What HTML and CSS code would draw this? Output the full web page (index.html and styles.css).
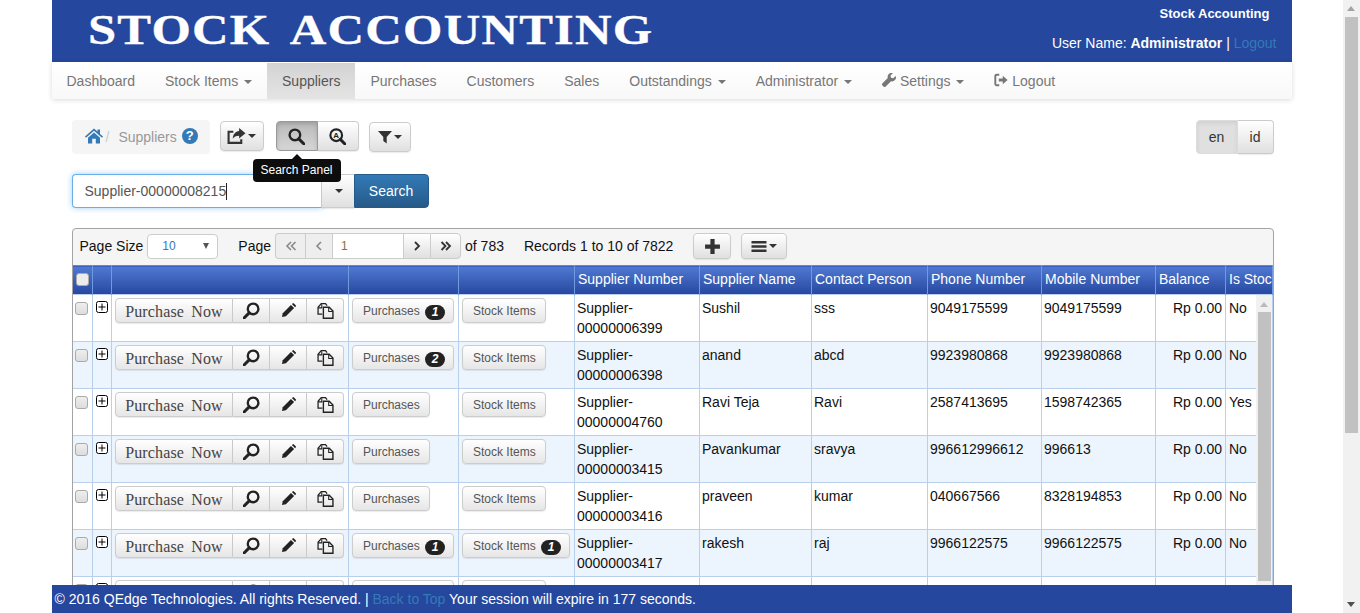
FILE: index.html
```html
<!DOCTYPE html>
<html lang="en">
<head>
<meta charset="utf-8">
<title>Stock Accounting - Suppliers</title>
<link rel="stylesheet" href="styles.css">
</head>
<body>
<svg class="defs" width="0" height="0" aria-hidden="true">
  <symbol id="i-search" viewBox="0 0 16 16"><circle cx="6.500" cy="6.500" r="5" fill="none" stroke="currentColor" stroke-width="2.200"/><path d="M10.200 10.200 15 15" stroke="currentColor" stroke-width="2.800" stroke-linecap="round"/></symbol>
  <symbol id="i-search-l" viewBox="0 0 16 16"><circle cx="9.500" cy="6.500" r="5" fill="none" stroke="currentColor" stroke-width="2.200"/><path d="M5.800 10.200 1 15" stroke="currentColor" stroke-width="2.800" stroke-linecap="round"/></symbol>
  <symbol id="i-pencil" viewBox="0 0 16 16"><path d="M1 15l.9-4.200L10.600 2l3.400 3.400-8.800 8.700z" fill="currentColor"/><path d="M11.600 1l.8-.6a1 1 0 0 1 1.300 0l2 2a1 1 0 0 1 0 1.300l-.7.7z" fill="currentColor"/></symbol>
  <symbol id="i-copy" viewBox="0 0 16 16"><path d="M5 11.500H1V5l3-3.500h4L9.500 3.500" fill="none" stroke="currentColor" stroke-width="1.200"/><path d="M4.500 2v3.500H1" fill="none" stroke="currentColor" stroke-width="1"/><path d="M6 5h5.500l3.500 3.500v6.800H6z" fill="none" stroke="currentColor" stroke-width="1.300"/><path d="M11 5v4h4" fill="none" stroke="currentColor" stroke-width="1"/></symbol>
  <symbol id="i-expand" viewBox="0 0 12 12"><rect x=".5" y=".5" width="11" height="11" rx="2" fill="#fff" stroke="#000"/><path d="M2.500 6h7M6 2.500v7" stroke="#000"/></symbol>
</svg>
<div class="window">
  <div class="viewport">
    <div class="page">
      <header class="masthead">
        <div class="brand">STOCK ACCOUNTING</div>
        <div class="user-box">
          <div class="app-name">Stock Accounting</div>
          <div class="user-line">User Name: <b>Administrator</b> | <a class="dim-link">Logout</a></div>
        </div>
      </header>
      <nav class="navbar">
        <a class="nav-item">Dashboard</a>
        <a class="nav-item">Stock Items <i class="caret"></i></a>
        <a class="nav-item active">Suppliers</a>
        <a class="nav-item">Purchases</a>
        <a class="nav-item">Customers</a>
        <a class="nav-item">Sales</a>
        <a class="nav-item">Outstandings <i class="caret"></i></a>
        <a class="nav-item">Administrator <i class="caret"></i></a>
        <a class="nav-item"><svg class="nav-icon" viewBox="0 0 16 16"><path d="M15.600 3.300l-2.800 2.700-2.500-.6-.6-2.500L12.400.2a4.500 4.500 0 0 0-5.800 5.500L.6 11.700a1.900 1.900 0 0 0 0 2.700l1 1a1.900 1.900 0 0 0 2.700 0l6-6a4.500 4.500 0 0 0 5.300-6.100z" fill="currentColor"/></svg> Settings <i class="caret"></i></a>
        <a class="nav-item"><svg class="nav-icon" viewBox="0 0 16 16"><path d="M6 2H3a1.500 1.500 0 0 0-1.500 1.500v9A1.500 1.500 0 0 0 3 14h3" fill="none" stroke="currentColor" stroke-width="2.200"/><path d="M5.500 6.300h4.500V3.200L15.500 8 10 12.800V9.700H5.500z" fill="currentColor"/></svg> Logout</a>
      </nav>

      <section class="content">
        <div class="toolbar">
          <div class="crumbs">
            <svg class="home" viewBox="0 0 18 16"><path d="M9 .6 0 8.500l1 1.200L9 2.800l8 6.900 1-1.200-3-2.600V1.500h-2.500v1.900zM3 9.800V15.500h4.200V10.700h3.600v4.800H15V9.800L9 4.600z" fill="currentColor"/></svg>
            <span class="sep">/</span>
            <span class="crumb-text">Suppliers</span>
            <span class="help">?</span>
          </div>
          <button class="btn share-btn"><svg class="ico-share" viewBox="0 0 18 16"><path d="M13.500 10.500V14H1.500V3.500H6" fill="none" stroke="currentColor" stroke-width="2"/><path d="M11.500 0 17.500 5l-6 5V7.200c-3 0-5 1-6 3 0-4 2.500-7 6-7.300z" fill="currentColor"/></svg><i class="caret dark"></i></button>
          <div class="btn-group search-group">
            <button class="btn pressed"><svg class="ico17"><use href="#i-search"/></svg></button>
            <button class="btn"><svg class="ico17" viewBox="0 0 16 16"><circle cx="6.800" cy="6.800" r="5.500" fill="none" stroke="currentColor" stroke-width="2"/><path d="M10.700 10.700 15 15" stroke="currentColor" stroke-width="2.800" stroke-linecap="round"/><text x="6.800" y="9.200" text-anchor="middle" class="ico-letter">A</text></svg></button>
            <div class="tooltip">Search Panel</div>
          </div>
          <button class="btn filter-btn"><svg class="ico-filter" viewBox="0 0 14 14"><path d="M0 1h14L8.700 7v6.500L5.300 11V7z" fill="currentColor"/></svg><i class="caret dark"></i></button>
          <div class="lang">
            <button class="btn pressed-soft">en</button>
            <button class="btn">id</button>
          </div>
        </div>

        <div class="search-row">
          <div class="search-input">Supplier-00000008215<span class="cursor"></span></div>
          <button class="btn drop-btn"><i class="caret dark"></i></button>
          <button class="btn-primary">Search</button>
        </div>

        <div class="grid">
          <div class="pager">
            <label class="pager-label">Page Size</label>
            <div class="size-select"><span>10</span><i class="select-arrow"></i></div>
            <label class="pager-label page-label">Page</label>
            <div class="page-nav">
              <button class="pg off"><svg class="chev" viewBox="0 0 12 12"><path d="M6 2 2 6l4 4M10.500 2l-4 4 4 4" fill="none" stroke="currentColor" stroke-width="1.600"/></svg></button><button class="pg off"><svg class="chev" viewBox="0 0 12 12"><path d="M8 2 4 6l4 4" fill="none" stroke="currentColor" stroke-width="1.600"/></svg></button>
              <div class="pg-input">1</div>
              <button class="pg"><svg class="chev" viewBox="0 0 12 12"><path d="M4 2l4 4-4 4" fill="none" stroke="currentColor" stroke-width="1.800"/></svg></button><button class="pg"><svg class="chev" viewBox="0 0 12 12"><path d="M1.500 2l4 4-4 4M6 2l4 4-4 4" fill="none" stroke="currentColor" stroke-width="1.800"/></svg></button>
            </div>
            <span class="of">of 783</span>
            <span class="records">Records 1 to 10 of 7822</span>
            <button class="btn add-btn"><svg class="ico-plus" viewBox="0 0 16 16"><path d="M6 1h4v5h5v4h-5v5H6v-5H1V6h5z" fill="currentColor"/></svg></button>
            <button class="btn menu-btn"><svg class="ico-menu" viewBox="0 0 15 13"><path d="M0 1h15v2.400H0zM0 5.300h15v2.400H0zM0 9.600h15V12H0z" fill="currentColor"/></svg><i class="caret dark"></i></button>
          </div>
          <div class="table-wrap">
            <table class="data">
              <colgroup>
                <col class="c20"><col class="c19"><col class="c237"><col class="c110"><col class="c116"><col class="c125"><col class="c112"><col class="c116"><col class="c114"><col class="c114"><col class="c70"><col class="c47">
              </colgroup>
              <thead>
                <tr><th><span class="check head"></span></th><th></th><th></th><th></th><th></th><th>Supplier Number</th><th>Supplier Name</th><th>Contact Person</th><th>Phone Number</th><th>Mobile Number</th><th>Balance</th><th class="clip">Is Stockist</th></tr>
              </thead>
              <tbody>
                <tr>
                  <td><span class="check"></span></td><td><svg class="expand"><use href="#i-expand"/></svg></td>
                  <td class="ctl"><div class="row-actions"><button class="act act-main">Purchase Now</button><button class="act act-ico"><svg class="ico17"><use href="#i-search-l"/></svg></button><button class="act act-ico"><svg class="ico15"><use href="#i-pencil"/></svg></button><button class="act act-ico"><svg class="ico17"><use href="#i-copy"/></svg></button></div></td>
                  <td class="ctl"><button class="act act-sub">Purchases <span class="count">1</span></button></td>
                  <td class="ctl"><button class="act act-sub">Stock Items</button></td>
                  <td>Supplier-<br>00000006399</td><td>Sushil</td><td>sss</td><td>9049175599</td><td>9049175599</td><td class="num">Rp 0.00</td><td class="last">No</td>
                </tr>
                <tr class="alt">
                  <td><span class="check"></span></td><td><svg class="expand"><use href="#i-expand"/></svg></td>
                  <td class="ctl"><div class="row-actions"><button class="act act-main">Purchase Now</button><button class="act act-ico"><svg class="ico17"><use href="#i-search-l"/></svg></button><button class="act act-ico"><svg class="ico15"><use href="#i-pencil"/></svg></button><button class="act act-ico"><svg class="ico17"><use href="#i-copy"/></svg></button></div></td>
                  <td class="ctl"><button class="act act-sub">Purchases <span class="count">2</span></button></td>
                  <td class="ctl"><button class="act act-sub">Stock Items</button></td>
                  <td>Supplier-<br>00000006398</td><td>anand</td><td>abcd</td><td>9923980868</td><td>9923980868</td><td class="num">Rp 0.00</td><td class="last">No</td>
                </tr>
                <tr>
                  <td><span class="check"></span></td><td><svg class="expand"><use href="#i-expand"/></svg></td>
                  <td class="ctl"><div class="row-actions"><button class="act act-main">Purchase Now</button><button class="act act-ico"><svg class="ico17"><use href="#i-search-l"/></svg></button><button class="act act-ico"><svg class="ico15"><use href="#i-pencil"/></svg></button><button class="act act-ico"><svg class="ico17"><use href="#i-copy"/></svg></button></div></td>
                  <td class="ctl"><button class="act act-sub plain">Purchases</button></td>
                  <td class="ctl"><button class="act act-sub">Stock Items</button></td>
                  <td>Supplier-<br>00000004760</td><td>Ravi Teja</td><td>Ravi</td><td>2587413695</td><td>1598742365</td><td class="num">Rp 0.00</td><td class="last">Yes</td>
                </tr>
                <tr class="alt">
                  <td><span class="check"></span></td><td><svg class="expand"><use href="#i-expand"/></svg></td>
                  <td class="ctl"><div class="row-actions"><button class="act act-main">Purchase Now</button><button class="act act-ico"><svg class="ico17"><use href="#i-search-l"/></svg></button><button class="act act-ico"><svg class="ico15"><use href="#i-pencil"/></svg></button><button class="act act-ico"><svg class="ico17"><use href="#i-copy"/></svg></button></div></td>
                  <td class="ctl"><button class="act act-sub plain">Purchases</button></td>
                  <td class="ctl"><button class="act act-sub">Stock Items</button></td>
                  <td>Supplier-<br>00000003415</td><td>Pavankumar</td><td>sravya</td><td>996612996612</td><td>996613</td><td class="num">Rp 0.00</td><td class="last">No</td>
                </tr>
                <tr>
                  <td><span class="check"></span></td><td><svg class="expand"><use href="#i-expand"/></svg></td>
                  <td class="ctl"><div class="row-actions"><button class="act act-main">Purchase Now</button><button class="act act-ico"><svg class="ico17"><use href="#i-search-l"/></svg></button><button class="act act-ico"><svg class="ico15"><use href="#i-pencil"/></svg></button><button class="act act-ico"><svg class="ico17"><use href="#i-copy"/></svg></button></div></td>
                  <td class="ctl"><button class="act act-sub plain">Purchases</button></td>
                  <td class="ctl"><button class="act act-sub">Stock Items</button></td>
                  <td>Supplier-<br>00000003416</td><td>praveen</td><td>kumar</td><td>040667566</td><td>8328194853</td><td class="num">Rp 0.00</td><td class="last">No</td>
                </tr>
                <tr class="alt">
                  <td><span class="check"></span></td><td><svg class="expand"><use href="#i-expand"/></svg></td>
                  <td class="ctl"><div class="row-actions"><button class="act act-main">Purchase Now</button><button class="act act-ico"><svg class="ico17"><use href="#i-search-l"/></svg></button><button class="act act-ico"><svg class="ico15"><use href="#i-pencil"/></svg></button><button class="act act-ico"><svg class="ico17"><use href="#i-copy"/></svg></button></div></td>
                  <td class="ctl"><button class="act act-sub">Purchases <span class="count">1</span></button></td>
                  <td class="ctl"><button class="act act-sub wide">Stock Items <span class="count">1</span></button></td>
                  <td>Supplier-<br>00000003417</td><td>rakesh</td><td>raj</td><td>9966122575</td><td>9966122575</td><td class="num">Rp 0.00</td><td class="last">No</td>
                </tr>
                <tr>
                  <td><span class="check"></span></td><td><svg class="expand"><use href="#i-expand"/></svg></td>
                  <td class="ctl"><div class="row-actions"><button class="act act-main">Purchase Now</button><button class="act act-ico"><svg class="ico17"><use href="#i-search-l"/></svg></button><button class="act act-ico"><svg class="ico15"><use href="#i-pencil"/></svg></button><button class="act act-ico"><svg class="ico17"><use href="#i-copy"/></svg></button></div></td>
                  <td class="ctl"><button class="act act-sub">Purchases</button></td>
                  <td class="ctl"><button class="act act-sub">Stock Items</button></td>
                  <td></td><td></td><td></td><td></td><td></td><td></td><td></td>
                </tr>
              </tbody>
            </table>
            <div class="inner-scroll"><span class="inner-up"></span><span class="inner-thumb"></span></div>
          </div>
        </div>
      </section>
    </div>
    <footer class="footer">
      <div class="footer-bar">© 2016 QEdge Technologies. All rights Reserved. | <a class="dim-link">Back to Top</a> Your session will expire in 177 seconds.</div>
    </footer>
  </div>
  <div class="scrollbar"><span class="sb-up"></span><span class="sb-thumb"></span><span class="sb-down"></span></div>
</div>
</body>
</html>
```

FILE: styles.css
```css
* { box-sizing: border-box; }
html, body { margin: 0; padding: 0; height: 613px; overflow: hidden; }
body { font-family: "Liberation Sans", Arial, sans-serif; font-size: 14px; line-height: 20px; color: #333; background: #fff; }
.defs { position: absolute; }
button { font-family: inherit; margin: 0; }

.window { display: flex; height: 613px; }
.viewport { position: relative; flex: 1; min-width: 0; height: 613px; overflow: hidden; }
.page { width: 1240px; margin: 0 auto; }

.masthead { height: 62px; background: #26479e; display: flex; justify-content: space-between; color: #fff; }
.brand { font-family: "Liberation Serif", serif; font-weight: bold; font-size: 42px; line-height: 60px; letter-spacing: 1px; word-spacing: 7px; margin-left: 36px; transform: scaleX(1.205); transform-origin: left center; white-space: nowrap; -webkit-text-stroke: .3px #fff; }
.user-box { padding: 4px 15px 0 0; text-align: right; }
.app-name { font-weight: bold; font-size: 13px; padding-right: 7px; line-height: 20px; }
.user-line { margin-top: 9px; line-height: 20px; }
.dim-link { color: #337ab7; }

.navbar { height: 37px; border-top: 1px solid #fff; display: flex; background: linear-gradient(#fff, #f8f8f8); box-shadow: 0 1px 5px rgba(0,0,0,.15); color: #777; }
.nav-item { padding: 8px 15px 0; height: 36px; white-space: nowrap; }
.nav-item.active { background: linear-gradient(#d3d3d3, #e4e4e4); color: #555; }
.nav-icon { width: 14px; height: 14px; vertical-align: -1px; }
.caret { display: inline-block; width: 0; height: 0; margin-left: 2px; vertical-align: middle; border-top: 4px solid; border-right: 4px solid transparent; border-left: 4px solid transparent; }
.caret.dark { color: #333; }

.content { padding: 21px 18px 0 20px; }
.toolbar { display: flex; align-items: flex-start; height: 54px; position: relative; }
.crumbs { width: 138px; height: 34px; background: #f5f5f5; border-radius: 4px; display: flex; align-items: center; padding-left: 13px; color: #999; }
.home { width: 18px; height: 16px; color: #337ab7; margin-top: -3px; }
.sep { margin: 0 9px 0 3px; color: #ccc; }
.crumb-text { color: #999; }
.help { width: 16px; height: 16px; margin: -2px 0 0 5px; border-radius: 50%; background: #337ab7; color: #fff; font-size: 13px; font-weight: bold; line-height: 16px; text-align: center; }
.btn { height: 30px; padding: 0 10px; border: 1px solid #ccc; border-radius: 4px; background: linear-gradient(#fff, #e0e0e0); color: #333; font-size: 14px; display: inline-flex; align-items: center; justify-content: center; box-shadow: 0 1px 1px rgba(0,0,0,.08); }
.share-btn { width: 44px; margin: 1px 0 0 10px; padding: 0; }
.ico-share { width: 19px; height: 17px; }
.btn-group { display: flex; position: relative; margin: 1px 0 0 12px; }
.btn-group .btn { width: 41px; padding: 0; }
.btn-group .btn:first-child { width: 42px; border-radius: 4px 0 0 4px; }
.btn-group .btn:nth-child(2) { border-radius: 0 4px 4px 0; border-left: 0; }
.btn.pressed { background: linear-gradient(#b9b9b9, #d6d6d6); border-color: #999; box-shadow: inset 0 2px 4px rgba(0,0,0,.15); }
.ico17 { width: 17px; height: 17px; color: #222; }
.ico15 { width: 15px; height: 15px; color: #222; }
.ico-letter { font-size: 7.500px; font-weight: bold; fill: currentColor; font-family: "Liberation Sans", sans-serif; }
.tooltip { position: absolute; left: -23px; top: 38px; width: 88px; height: 23px; background: #0d0d0d; color: #fff; font-size: 12px; line-height: 22px; text-align: center; border-radius: 4px; z-index: 5; }
.tooltip::before { content: ""; position: absolute; left: 39px; top: -5px; border-bottom: 5px solid #0d0d0d; border-left: 5px solid transparent; border-right: 5px solid transparent; }
.filter-btn { width: 42px; margin: 2px 0 0 10px; padding: 0; }
.ico-filter { width: 14px; height: 14px; }
.lang { margin: 0 0 0 auto; display: flex; }
.lang .btn { height: 34px; width: 42px; padding: 0; border-radius: 4px 0 0 4px; }
.lang .btn:last-child { width: 36px; border-radius: 0 4px 4px 0; border-left: 0; }
.btn.pressed-soft { background: #e0e0e0; box-shadow: inset 0 2px 4px rgba(0,0,0,.08); border-color: #ddd; }

.search-row { display: flex; height: 34px; }
.search-input { width: 250px; height: 34px; border: 1px solid #66afe9; border-right-color: #ccc; border-radius: 4px 0 0 4px; padding: 6px 12px; box-shadow: 0 0 6px rgba(102,175,233,.6); color: #555; background: #fff; }
.cursor { display: inline-block; width: 1px; height: 17px; background: #222; vertical-align: -4px; }
.drop-btn { width: 32px; height: 34px; padding: 0; border-radius: 0; border-left: 0; border-right: 0; }
.btn-primary { width: 75px; height: 34px; border: 1px solid #265a88; border-radius: 0 4px 4px 0; background: linear-gradient(#337ab7, #265a88); color: #fff; font-size: 14px; padding: 0; }

.grid { margin-top: 20px; width: 1202px; border: 1px solid #a3a3a3; border-radius: 4px; overflow: hidden; position: relative; background: #f5f5f5; }
.pager { height: 36px; display: flex; align-items: center; color: #111; padding: 0 0 2px 7px; }
.pager-label { white-space: nowrap; }
.size-select { width: 71px; height: 25px; margin-left: 4px; border: 1px solid #ccc; border-radius: 4px; background: #fff; display: flex; align-items: center; justify-content: space-between; padding: 0 8px 0 14px; font-size: 12px; color: #337ab7; }
.select-arrow { border-top: 6px solid #555; border-left: 3px solid transparent; border-right: 3px solid transparent; }
.page-label { margin-left: 20px; }
.page-nav { display: flex; height: 26px; margin: 0 0 0 4px; }
.pg { width: 27px; height: 26px; padding: 0; border: 1px solid #ccc; border-right: 0; background: linear-gradient(#fff, #e0e0e0); color: #333; display: flex; align-items: center; justify-content: center; }
.pg:first-child { width: 30px; border-radius: 4px 0 0 4px; }
.pg:last-child { border-radius: 0 4px 4px 0; border-right: 1px solid #ccc; width: 31px; }
.pg.off { background: #eee; color: #888; }
.chev { width: 12px; height: 12px; }
.pg-input { width: 71px; border: 1px solid #ccc; border-right: 0; background: #fff; font-size: 12px; padding: 2px 8px; color: #8a6d3b; }
.of { margin-left: 4px; white-space: nowrap; }
.records { margin-left: 20px; white-space: nowrap; }
.add-btn { width: 38px; height: 26px; margin: 0 0 0 20px; padding: 0; }
.ico-plus { width: 17px; height: 17px; }
.menu-btn { width: 46px; height: 26px; margin: 0 0 0 10px; padding: 0; }
.ico-menu { width: 16px; height: 13px; }

.table-wrap { position: relative; height: 400px; overflow: hidden; background: #fff; }
.data { border-collapse: collapse; table-layout: fixed; width: 1200px; color: #111; }
.c20 { width: 20px; } .c19 { width: 19px; } .c237 { width: 237px; } .c110 { width: 110px; } .c116 { width: 116px; } .c125 { width: 125px; } .c112 { width: 112px; } .c114 { width: 114px; } .c70 { width: 70px; } .c47 { width: 47px; }
.data th { height: 29px; padding: 1px 2px 4px 3px; text-align: left; font-weight: normal; color: #fff; white-space: nowrap; overflow: hidden; background: linear-gradient(#5079d3, #26479e); border-right: 1px solid #6f9ae0; border-top: 1px solid #5c8bdc; font-size: 14px; }
.data th:first-child { padding-left: 2px; }
.data td { height: 47px; padding: 3px 2px; vertical-align: top; border: 1px solid #b9d0ec; border-left: 0; }
.data td.ctl { padding: 3px; }
.data td.last { padding-left: 3px; }
.data tbody tr.alt td { background: #ecf4fd; }
.data td.num { text-align: right; padding-right: 3px; }
.clip { text-overflow: clip; }
.check { display: block; width: 13px; height: 13px; border: 1px solid #aaa; border-radius: 3px; background: linear-gradient(#eee, #ddd); margin: 4px 0 0 0; }
.check.head { margin: 2px 0 0 1px; background: #ececec; }
.expand { display: block; width: 12px; height: 12px; margin: 3px 0 0 1px; }
.row-actions { display: flex; height: 25px; }
.act { height: 25px; padding: 0; border: 1px solid #ccc; border-left-width: 0; background: linear-gradient(#fff, #e6e6e6); color: #444; box-shadow: 0 1px 1px rgba(0,0,0,.08); }
.act-main { width: 118px; padding-top: 2px; font-family: "Liberation Serif", serif; font-size: 16px; letter-spacing: .15px; word-spacing: 3px; border-left-width: 1px; border-radius: 4px 0 0 4px; white-space: nowrap; }
.act-ico { width: 37px; color: #222; display: flex; align-items: center; justify-content: center; }
.act-ico:last-child { border-radius: 0 4px 4px 0; }
.act-sub { border-left-width: 1px; border-radius: 4px; font-size: 12px; padding: 0 10px; white-space: nowrap; width: 84px; color: #555; }
td:nth-child(4) .act-sub { width: 102px; }
td:nth-child(4) .act-sub.plain { width: 78px; }
td:nth-child(5) .act-sub.wide { width: 108px; }
.count { display: inline-block; min-width: 20px; height: 15px; margin: -2px 0 -2px 2px; padding: 0 5px; border-radius: 8px; background: #222; color: #fff; font-size: 12px; font-weight: bold; font-style: italic; line-height: 15px; text-align: center; vertical-align: -1px; }

.inner-scroll { position: absolute; right: 1px; top: 30px; width: 16px; bottom: 0; background: #f1f1f1; }
.inner-up { position: absolute; left: 4px; top: 7px; border-bottom: 5px solid #bbb; border-left: 4px solid transparent; border-right: 4px solid transparent; }
.inner-thumb { position: absolute; left: 2px; right: 1px; top: 17px; height: 269px; background: #c1c1c1; }

.footer { position: absolute; left: 0; right: 0; bottom: 0; height: 28px; z-index: 10; }
.footer-bar { width: 1240px; height: 28px; margin: 0 auto; background: #26479e; color: #fff; line-height: 28px; padding-left: 3px; white-space: nowrap; }

.scrollbar { width: 17px; height: 613px; background: #f1f1f1; position: relative; flex: none; }
.sb-up { position: absolute; left: 4px; top: 6px; border-bottom: 5px solid #a3a3a3; border-left: 4.500px solid transparent; border-right: 4.500px solid transparent; }
.sb-down { position: absolute; left: 4px; bottom: 6px; border-top: 5px solid #505050; border-left: 4.500px solid transparent; border-right: 4.500px solid transparent; }
.sb-thumb { position: absolute; left: 2px; right: 2px; top: 17px; height: 416px; background: #c1c1c1; }
```
